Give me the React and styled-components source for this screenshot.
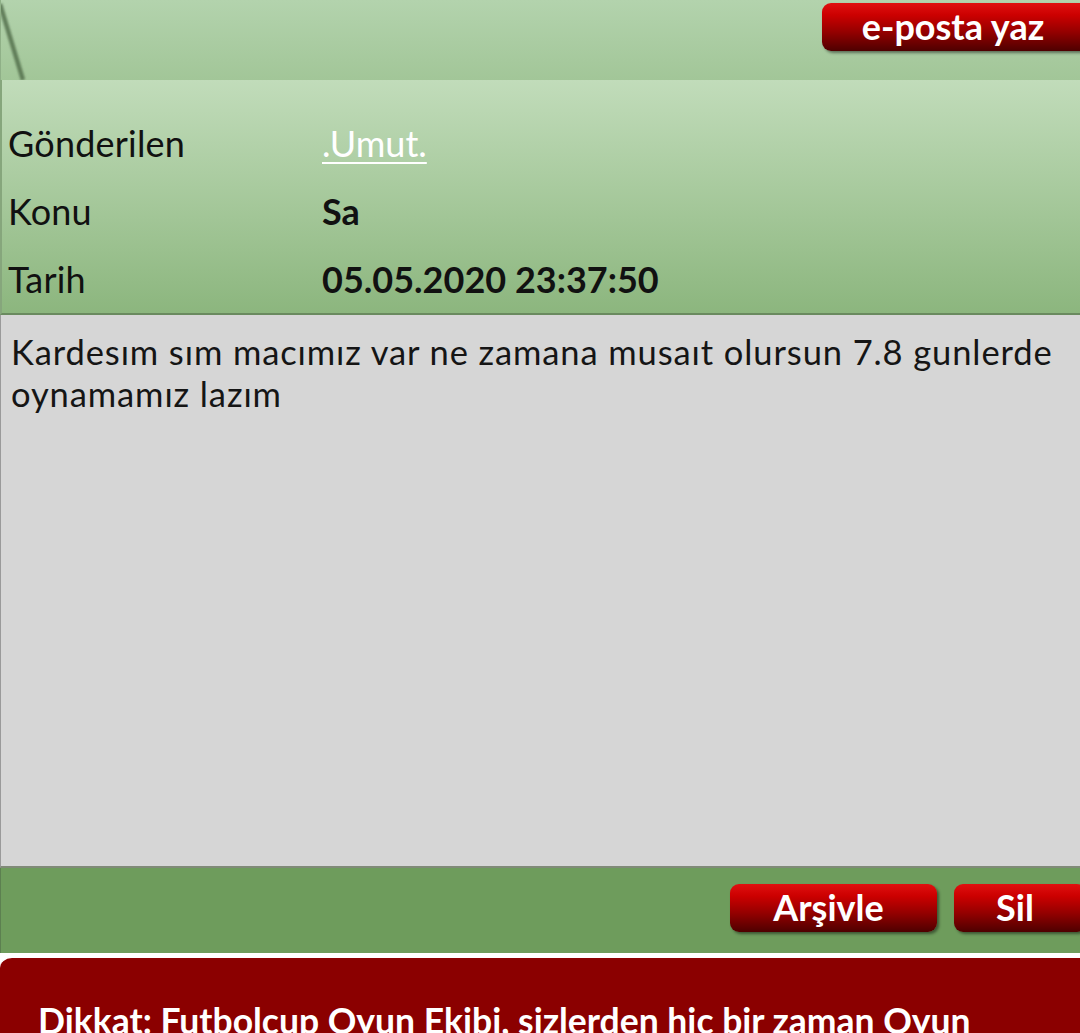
import React from "react";
import styled, { createGlobalStyle } from "styled-components";

const Global = createGlobalStyle`
  html, body { margin: 0; padding: 0; background: #ffffff; overflow: hidden; }
  body { font-family: Lato, "Open Sans", sans-serif; }
`;

const Page = styled.div`
  width: 1080px;
  height: 1033px;
  overflow: hidden;
  display: flex;
  flex-direction: column;
`;

const TopBar = styled.div`
  position: relative;
  height: 80px;
  flex: none;
  display: flex;
  justify-content: flex-end;
  align-items: flex-start;
  padding-top: 3px;
  box-sizing: border-box;
  background: linear-gradient(#b3d3ad, #a2c698);
`;

const TabEdge = styled.svg`
  position: absolute;
  left: 0;
  top: 0;
`;

const RedButton = styled.button`
  all: unset;
  box-sizing: border-box;
  display: flex;
  align-items: center;
  justify-content: center;
  width: ${(p) => p.$w}px;
  height: 48px;
  margin-right: ${(p) => p.$mr || 0}px;
  padding: 0 10px 3px 0;
  border-radius: 9px;
  background: linear-gradient(#e01010 0%, #cc0000 25%, #950000 60%, #4e0000 100%);
  box-shadow: 2px 2px 3px rgba(0, 0, 0, 0.45);
  color: #ffffff;
  font-family: Lato, sans-serif;
  font-weight: 700;
  font-size: 36px;
  flex: none;
`;

const Header = styled.div`
  flex: none;
  height: 235px;
  box-sizing: border-box;
  padding-top: 29px;
  background: linear-gradient(#c1dcba, #8cb67e);
  border-left: 2px solid #86a67c;
  border-bottom: 2px solid #6a8a5f;
  display: flex;
  flex-direction: column;
`;

const InfoRow = styled.div`
  height: 68px;
  display: grid;
  grid-template-columns: 314px 1fr;
  align-items: center;
  padding-left: 6px;
  font-size: 36px;
  color: #111;
`;

const Label = styled.span`
  font-weight: 400;
  letter-spacing: 0.2px;
`;

const Value = styled.span`
  font-weight: ${(p) => (p.$link ? 400 : 700)};
  color: ${(p) => (p.$link ? "#ffffff" : "#111")};
  text-decoration: ${(p) => (p.$link ? "underline" : "none")};
  text-decoration-thickness: 2px;
  text-underline-offset: 5px;
`;

const Body = styled.div`
  flex: none;
  height: 553px;
  box-sizing: border-box;
  background: #d6d6d6;
  border-left: 1px solid #9a9a9a;
  border-bottom: 2px solid #808a78;
  padding: 16px 10px;
  font-size: 34.5px;
  line-height: 42px;
  letter-spacing: 0.9px;
  color: #151515;
`;

const Footer = styled.div`
  flex: none;
  height: 85px;
  box-sizing: border-box;
  background: #6e9c5c;
  border-left: 1px solid #5c8050;
  display: flex;
  justify-content: flex-end;
  align-items: flex-start;
  padding-top: 16px;
  gap: 17px;
`;

const Notice = styled.div`
  flex: 1;
  min-height: 0;
  margin-top: 3px;
  background: #8b0000;
  border-top: 2px solid #ffffff;
  border-top-left-radius: 12px;
  padding: 41px 38px 0 38px;
  color: #ffffff;
  font-size: 35.5px;
  line-height: 44px;
  font-weight: 700;
`;

export default function App() {
  return (
    <Page>
      <Global />
      <TopBar>
        <TabEdge width="40" height="80" viewBox="0 0 40 80">
          <defs>
            <filter id="soft" x="-50%" y="-10%" width="200%" height="120%">
              <feGaussianBlur stdDeviation="0.9" />
            </filter>
          </defs>
          <line x1="0" y1="4" x2="23" y2="80" stroke="#4f6a49" strokeWidth="4.5" strokeOpacity="0.8" filter="url(#soft)" />
          <line x1="0" y1="0" x2="0" y2="80" stroke="#8fb087" strokeWidth="2" />
        </TabEdge>
        <RedButton $w={272} $mr={-14}>e-posta yaz</RedButton>
      </TopBar>
      <Header>
        <InfoRow>
          <Label>Gönderilen</Label>
          <Value $link>.Umut.</Value>
        </InfoRow>
        <InfoRow>
          <Label>Konu</Label>
          <Value>Sa</Value>
        </InfoRow>
        <InfoRow>
          <Label>Tarih</Label>
          <Value>05.05.2020 23:37:50</Value>
        </InfoRow>
      </Header>
      <Body>
        Kardesım sım macımız var ne zamana musaıt olursun 7.8 gunlerde oynamamız lazım
      </Body>
      <Footer>
        <RedButton $w={207}>Arşivle</RedButton>
        <RedButton $w={132} $mr={-6}>Sil</RedButton>
      </Footer>
      <Notice>Dikkat: Futbolcup Oyun Ekibi, sizlerden hiç bir zaman Oyun şifrenizi istemez.</Notice>
    </Page>
  );
}
